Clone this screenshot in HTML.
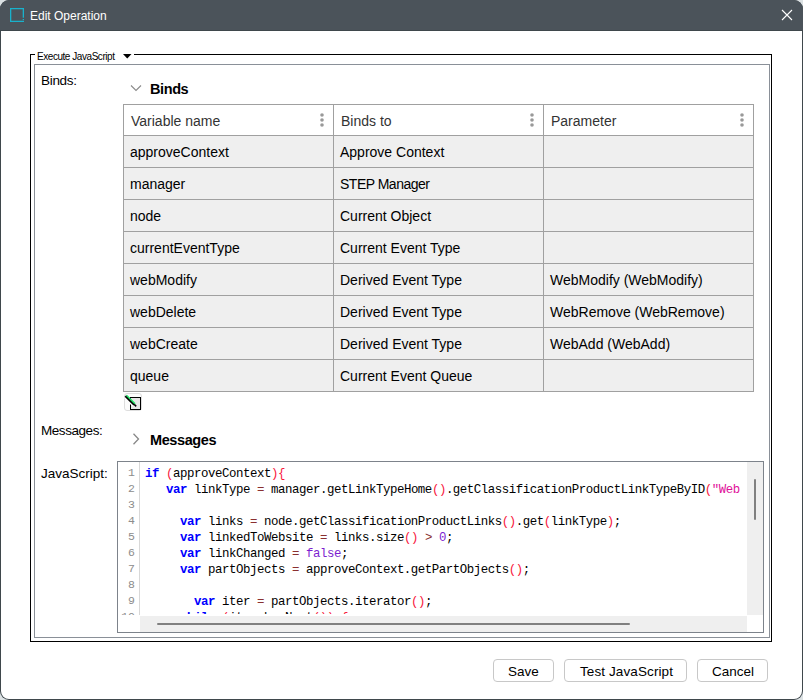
<!DOCTYPE html>
<html><head><meta charset="utf-8">
<style>
html,body{margin:0;padding:0;}
body{width:803px;height:700px;position:relative;overflow:hidden;background:#dbe1e3;font-family:"Liberation Sans",sans-serif;}
.win{position:absolute;left:0;top:0;width:803px;height:700px;border-radius:9px;background:#3f474c;overflow:hidden;}
.wbody{position:absolute;left:1px;top:31px;width:801px;height:668px;background:#fff;border-radius:0 0 8px 8px;}
.title{position:absolute;left:0;top:0;width:803px;height:30px;background:#4b535a;}
.ab{position:absolute;}
.t{position:absolute;white-space:pre;line-height:1;}
.lbl{font-size:13px;color:#000;}
.th{font-size:14px;color:#333;}
.td{font-size:14px;color:#000;}
.row{position:absolute;left:0;width:629px;height:31px;background:#efefef;border-top:1px solid #a0a0a0;}
.code{font-family:"Liberation Mono",monospace;font-size:12.4px;letter-spacing:-0.44px;}
.k{color:#0000ff;font-weight:bold;}
.p{color:#f81840;}
.s{color:#e0109a;}
.n{color:#7d1fd0;}
.o{color:#8a3030;}
.btn{position:absolute;top:659px;height:21px;border:1px solid #c8c8c8;border-radius:4px;background:#fff;}
</style></head><body>
<div class="win">
  <div class="title"></div>
  <div class="wbody"></div>
</div>
<!-- title icon -->
<svg class="ab" style="left:10px;top:8px" width="15" height="15" viewBox="0 0 15 15"><path d="M0 0H14V9.7H12.7V1.3H1.3V12.7H14V14H0Z" fill="#19b2cc"/><rect x="12.7" y="11" width="1.3" height="1.1" fill="#19b2cc"/></svg>
<div class="t" style="left:30px;top:10px;font-size:12px;color:#fff;">Edit Operation</div>
<svg class="ab" style="left:781px;top:9px" width="13" height="13" viewBox="0 0 13 13"><path d="M1 1L11 11M11 1L1 11" stroke="#fff" stroke-width="1.1"/></svg>

<!-- fieldset -->
<div class="ab" style="left:30px;top:54px;width:740px;height:586px;border:1px solid #000;"></div>
<div class="ab" style="left:35px;top:50px;width:99px;height:10px;background:#fff;"></div>
<div class="t" style="left:37px;top:52px;font-size:10px;letter-spacing:-0.45px;color:#000;">Execute JavaScript</div>
<svg class="ab" style="left:123px;top:54px" width="9" height="6" viewBox="0 0 9 6"><path d="M0 0H8.5L4.25 4.5Z" fill="#000"/></svg>
<div class="ab" style="left:34px;top:64px;width:734px;height:572px;border:1px solid #8a9098;"></div>

<div class="t lbl" style="left:41px;top:74px;font-size:13.5px;letter-spacing:-0.3px;">Binds:</div>
<svg class="ab" style="left:130px;top:84px" width="12" height="8" viewBox="0 0 12 8"><path d="M1 1.5L6 6.5L11 1.5" fill="none" stroke="#8a8a8a" stroke-width="1.1"/></svg>
<div class="t" style="left:150px;top:82px;font-size:14.5px;letter-spacing:-0.4px;font-weight:bold;color:#000;">Binds</div>

<!-- table -->
<div class="ab" style="left:123px;top:104px;width:629px;height:286px;border:1px solid #a0a0a0;background:#fff;">
  <div class="row" style="top:30px"></div>
  <div class="row" style="top:62px"></div>
  <div class="row" style="top:94px"></div>
  <div class="row" style="top:126px"></div>
  <div class="row" style="top:158px"></div>
  <div class="row" style="top:190px"></div>
  <div class="row" style="top:222px"></div>
  <div class="row" style="top:254px"></div>
  <div class="ab" style="left:209px;top:0;width:1px;height:286px;background:#a0a0a0"></div>
  <div class="ab" style="left:419px;top:0;width:1px;height:286px;background:#a0a0a0"></div>
  <div class="t th" style="left:7px;top:9px;">Variable name</div>
  <svg class="ab" style="left:196px;top:8px" width="4" height="14" viewBox="0 0 4 14"><circle cx="2" cy="2" r="1.8" fill="#999"/><circle cx="2" cy="7" r="1.8" fill="#999"/><circle cx="2" cy="12" r="1.8" fill="#999"/></svg>
  <div class="t th" style="left:217px;top:9px;">Binds to</div>
  <svg class="ab" style="left:406px;top:8px" width="4" height="14" viewBox="0 0 4 14"><circle cx="2" cy="2" r="1.8" fill="#999"/><circle cx="2" cy="7" r="1.8" fill="#999"/><circle cx="2" cy="12" r="1.8" fill="#999"/></svg>
  <div class="t th" style="left:427px;top:9px;">Parameter</div>
  <svg class="ab" style="left:616px;top:8px" width="4" height="14" viewBox="0 0 4 14"><circle cx="2" cy="2" r="1.8" fill="#999"/><circle cx="2" cy="7" r="1.8" fill="#999"/><circle cx="2" cy="12" r="1.8" fill="#999"/></svg>
  <div class="t td" style="left:6px;top:40px;">approveContext</div>
  <div class="t td" style="left:216px;top:40px;">Approve Context</div>
  <div class="t td" style="left:6px;top:72px;">manager</div>
  <div class="t td" style="left:216px;top:72px;letter-spacing:-0.5px;">STEP Manager</div>
  <div class="t td" style="left:6px;top:104px;">node</div>
  <div class="t td" style="left:216px;top:104px;">Current Object</div>
  <div class="t td" style="left:6px;top:136px;">currentEventType</div>
  <div class="t td" style="left:216px;top:136px;">Current Event Type</div>
  <div class="t td" style="left:6px;top:168px;">webModify</div>
  <div class="t td" style="left:216px;top:168px;">Derived Event Type</div>
  <div class="t td" style="left:426px;top:168px;">WebModify (WebModify)</div>
  <div class="t td" style="left:6px;top:200px;">webDelete</div>
  <div class="t td" style="left:216px;top:200px;">Derived Event Type</div>
  <div class="t td" style="left:426px;top:200px;">WebRemove (WebRemove)</div>
  <div class="t td" style="left:6px;top:232px;">webCreate</div>
  <div class="t td" style="left:216px;top:232px;">Derived Event Type</div>
  <div class="t td" style="left:426px;top:232px;">WebAdd (WebAdd)</div>
  <div class="t td" style="left:6px;top:264px;">queue</div>
  <div class="t td" style="left:216px;top:264px;">Current Event Queue</div>
</div>
<!-- edit icon -->
<div class="ab" style="left:124px;top:393px;width:16px;height:16px;border:1px solid #dedede;border-radius:3px;background:#fcfcfc;"></div>
<div class="ab" style="left:130px;top:397px;width:8.5px;height:10.5px;border-style:solid;border-color:#000;border-width:1.4px 1.8px 1.8px 1.4px;background:#e6e6e6;"></div>
<svg class="ab" style="left:124px;top:393px" width="18" height="18" viewBox="0 0 18 18"><path d="M1.2 4.2L9.8 12.8" stroke="#fcfcfc" stroke-width="3"/><path d="M1.4 3.0L10.2 11.8" stroke="#000" stroke-width="2.2"/><path d="M2.4 2.2L11 10.8" stroke="#22e066" stroke-width="1.6"/><path d="M10.2 11.4L12.2 13.4" stroke="#000" stroke-width="1.5"/></svg>

<div class="t lbl" style="left:41px;top:424px;font-size:13.5px;letter-spacing:-0.45px;">Messages:</div>
<svg class="ab" style="left:132px;top:433px" width="8" height="12" viewBox="0 0 8 12"><path d="M1.5 0.8L6.5 6L1.5 11.2" fill="none" stroke="#888" stroke-width="1.3"/></svg>
<div class="t" style="left:150px;top:432.5px;font-size:14.5px;letter-spacing:-0.4px;font-weight:bold;color:#000;">Messages</div>

<div class="t lbl" style="left:41px;top:467px;font-size:13.5px;letter-spacing:0px;">JavaScript:</div>

<!-- code editor -->
<div class="ab" style="left:117px;top:461px;width:645px;height:170px;border:1px solid #7d838b;background:#fff;overflow:hidden;">
  <div class="ab" style="left:21px;top:0;width:1px;height:153px;background:#d8d8d8;"></div>
  <div class="ab" style="left:0;top:0;width:21px;height:153px;overflow:hidden;"><div class="ab" id="gut" style="left:0;top:3px;width:17px;text-align:right;color:#8c8c8c;line-height:16px;font-family:'Liberation Mono',monospace;font-size:11.5px;">1<br>2<br>3<br>4<br>5<br>6<br>7<br>8<br>9<br>10</div></div>
  <div class="ab" style="left:22px;top:0;width:600px;height:152px;overflow:hidden;"><div class="ab code" id="codetxt" style="left:5px;top:4px;white-space:pre;color:#000;line-height:16px;"><b class="k">if</b> <span class="p">(</span>approveContext<span class="p">)</span><span class="p">{</span>
   <b class="k">var</b> linkType <span class="o">=</span> manager.getLinkTypeHome<span class="p">(</span><span class="p">)</span>.getClassificationProductLinkTypeByID<span class="p">(</span><span class="s">&quot;WebsiteLink&quot;</span><span class="p">)</span>;

     <b class="k">var</b> links <span class="o">=</span> node.getClassificationProductLinks<span class="p">(</span><span class="p">)</span>.get<span class="p">(</span>linkType<span class="p">)</span>;
     <b class="k">var</b> linkedToWebsite <span class="o">=</span> links.size<span class="p">(</span><span class="p">)</span> <span class="o">&gt;</span> <span class="n">0</span>;
     <b class="k">var</b> linkChanged <span class="o">=</span> <span class="n">false</span>;
     <b class="k">var</b> partObjects <span class="o">=</span> approveContext.getPartObjects<span class="p">(</span><span class="p">)</span>;

       <b class="k">var</b> iter <span class="o">=</span> partObjects.iterator<span class="p">(</span><span class="p">)</span>;
     <b class="k">while</b> <span class="p">(</span>iter.hasNext<span class="p">(</span><span class="p">)</span><span class="p">)</span> <span class="p">{</span></div></div>
  <div class="ab" style="left:22px;top:154px;width:607px;height:16px;background:#efefef;"></div>
  <div class="ab" style="left:39px;top:161px;width:473px;height:2px;background:#808080;border-radius:1px;"></div>
  <div class="ab" style="left:629px;top:0;width:16px;height:153px;background:#efefef;"></div>
  <div class="ab" style="left:636px;top:17px;width:2px;height:41px;background:#808080;border-radius:1px;"></div>
  <div class="ab" style="left:629px;top:153px;width:16px;height:17px;background:#fff;"></div>
</div>

<!-- buttons -->
<div class="btn" style="left:493px;width:59px;"></div>
<div class="t lbl" style="left:508px;top:665px;font-size:13.5px;">Save</div>
<div class="btn" style="left:564px;width:121px;"></div>
<div class="t lbl" style="left:580px;top:665px;font-size:13.5px;letter-spacing:0.1px;">Test JavaScript</div>
<div class="btn" style="left:697px;width:69px;"></div>
<div class="t lbl" style="left:712px;top:665px;font-size:13.5px;">Cancel</div>
</body></html>
